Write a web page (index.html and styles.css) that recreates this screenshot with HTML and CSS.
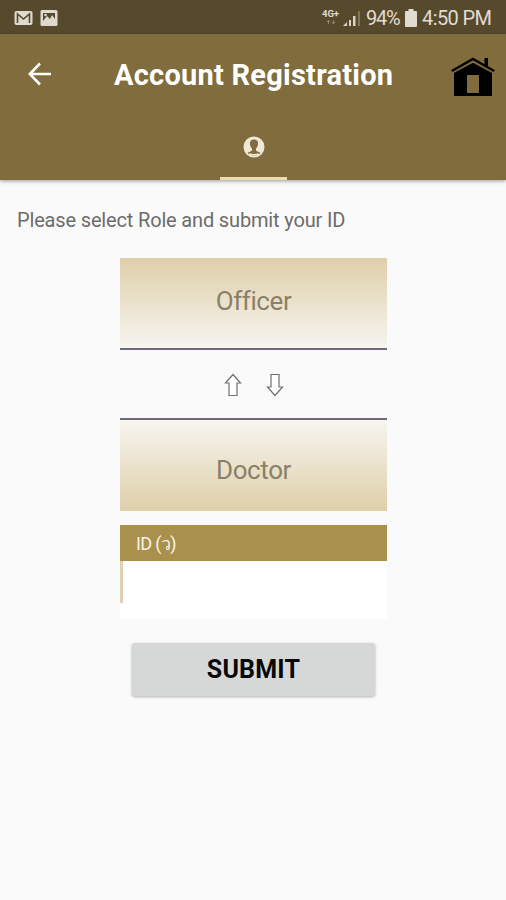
FILE: index.html
```html
<!DOCTYPE html>
<html lang="en">
<head>
<meta charset="utf-8">
<title>Account Registration</title>
<link rel="stylesheet" href="styles.css">
</head>
<body>
<div class="status">
  <svg class="notices" width="44" height="18" viewBox="0 0 44 18">
    <rect x="0.500" y="2" width="18" height="14" rx="2" fill="#dedad0"/>
    <path d="M3.500 14V5l6 5 6-5v9" fill="none" stroke="#574a2c" stroke-width="1.600"/>
    <rect x="26.500" y="1" width="17" height="16" rx="1.500" fill="#dedad0"/>
    <path d="M29 12V4h12v6l-3-4-2 4-3-3z" fill="#574a2c"/>
    <circle cx="31.500" cy="6" r="1.300" fill="#dedad0"/>
  </svg>
  <div class="network"><span>4G+</span><svg width="10" height="6" viewBox="0 0 10 6"><path d="M1 3l1.500-2L4 3M2.500 1v4M6 3l1.500 2L9 3M7.500 5V1" fill="none" stroke="#8b8164" stroke-width="1"/></svg></div>
  <svg class="signal" width="18" height="18" viewBox="0 0 18 18"><path d="M0 17l4-4v4zM6 11h2v6H6zM10 7h2.500v10H10z" fill="#d8d3c7"/><path d="M15 2h2v15h-2z" fill="#81775b"/></svg>
  <span class="percent">94%</span>
  <svg class="battery" width="12" height="18" viewBox="0 0 12 18"><path d="M3.500 0h5v2H11q1 0 1 1v14q0 1-1 1H1q-1 0-1-1V3q0-1 1-1h2.500z" fill="#e0dcd3"/></svg>
  <span class="time">4:50 PM</span>
</div>
<header class="header">
  <div class="toolbar">
    <svg class="back" width="24" height="24" viewBox="0 0 24 24"><path d="M23 12H2M12 1.500L1.800 12 12 22.500" fill="none" stroke="#fff" stroke-width="2.600"/></svg>
    <h1 class="title">Account Registration</h1>
    <svg class="home" width="44" height="40" viewBox="0 0 44 40"><path d="M3 15L22 4.500 41 15V39H3zM16 18V36H28V18z" fill="#000" fill-rule="evenodd"/><path d="M.5 15L22 3.500 43.500 15" fill="none" stroke="#806c3d" stroke-width="4"/><path d="M.8 14L22 2 43.200 14" fill="none" stroke="#000" stroke-width="2.400"/><path d="M33.500 1H37v9l-3.500-2z"/></svg>
  </div>
  <div class="tab">
    <svg width="22" height="22" viewBox="0 0 22 22"><circle cx="11" cy="11" r="10.500" fill="#efe8d7"/><path d="M11 3.500c-3 0-4.300 1.900-4 4.500.2 2 1 3.500 2 4.500v2c-1.200 1-3 1.200-4.500 2.500C6.200 18.800 8.500 19.500 11 19.500s4.800-.7 6.500-2.500c-1.500-1.300-3.300-1.500-4.500-2.500v-2c1-1 1.800-2.500 2-4.500.3-2.600-1-4.500-4-4.500z" fill="#806c3d"/><path d="M6 18q5 1.400 10 0" stroke="#efe8d7" stroke-width="1.500" fill="none"/></svg>
  </div>
</header>
<main class="content">
  <p class="hint">Please select Role and submit your ID</p>
  <div class="form">
    <div class="role role-top"><span>Officer</span></div>
    <div class="arrows">
      <svg width="18" height="24" viewBox="0 0 18 24"><path d="M9 1.500L16.500 10H13v12.500H5V10H1.500z"/></svg>
      <svg width="18" height="24" viewBox="0 0 18 24"><path d="M9 22.500L16.500 14H13V1.500H5V14H1.500z"/></svg>
    </div>
    <div class="role role-bottom"><span>Doctor</span></div>
    <label class="id-label" for="id">ID (ว)</label>
    <div class="field"><input id="id" type="text"></div>
    <button class="submit">SUBMIT</button>
  </div>
</main>
</body>
</html>
```
FILE: styles.css
```css
* { box-sizing: border-box; }
body {
  margin: 0;
  height: 900px;
  background: #fafafa;
  font-family: Roboto, "Noto Sans", sans-serif;
  overflow: hidden;
}
.status {
  display: flex;
  align-items: center;
  height: 34px;
  padding: 2px 15px 0 14px;
  background: #574a2c;
  color: #e0dcd3;
  font-size: 20px;
  white-space: nowrap;
}
.network {
  display: flex;
  flex-direction: column;
  align-items: center;
  width: 19px;
  margin: -3px 0 0 auto;
  font-size: 9.500px;
  font-weight: 700;
  line-height: 10px;
}
.signal { margin-left: 3px; }
.percent { width: 34px; margin-left: 5px; letter-spacing: -1.200px; }
.battery { margin-left: 5px; }
.time { width: 69px; margin-left: 5px; letter-spacing: -.6px; }
.header {
  height: 146px;
  background: #806c3d;
  box-shadow: 0 1px 4px rgba(0, 0, 0, .4);
}
.toolbar {
  display: flex;
  align-items: center;
  height: 81px;
  padding: 0 11px 0 28px;
}
.back { flex: none; margin-top: -2px; }
.title {
  width: 281px;
  margin: 0 0 0 62px;
  color: #fff;
  font-size: 29px;
  font-weight: 700;
  line-height: 34px;
  letter-spacing: .24px;
  white-space: nowrap;
}
.home { flex: none; margin: 5px 0 0 auto; }
.tab {
  display: flex;
  justify-content: center;
  width: 67px;
  height: 65px;
  margin-left: 220px;
  padding-top: 21px;
  border-bottom: 3px solid #eddcae;
}
.hint {
  margin: 0;
  padding: 28px 0 0 17px;
  color: #6c6c6c;
  font-size: 20px;
  line-height: 24px;
  letter-spacing: -.16px;
}
.form {
  display: flex;
  flex-direction: column;
  width: 267px;
  margin: 26px 0 0 120px;
}
.role {
  display: flex;
  align-items: center;
  justify-content: center;
  height: 92px;
  color: #8a8068;
  font-size: 26px;
  letter-spacing: -.4px;
}
.role-top {
  padding-bottom: 4px;
  border-bottom: 2px solid #6f6876;
  background: linear-gradient(#dfcfaa, #f6f5ef);
}
.role-bottom {
  height: 93px;
  padding-top: 8px;
  border-top: 2px solid #6f6876;
  background: linear-gradient(#f6f5ef, #dfcfaa);
}
.arrows {
  display: flex;
  align-items: center;
  justify-content: center;
  gap: 24px;
  height: 68px;
  padding-top: 2px;
}
.arrows path { fill: #fff; stroke: #707070; stroke-width: 1.200; }
.id-label {
  height: 36px;
  margin-top: 14px;
  padding-left: 16px;
  background: #aa904d;
  color: #f8f3e8;
  font-size: 18px;
  line-height: 38px;
  letter-spacing: -.6px;
}
.field { height: 57px; background: #fff; }
.field input {
  display: block;
  width: 100%;
  height: 42px;
  padding: 0 14px;
  border: 0;
  border-left: 3px solid #ddd2b5;
  background: transparent;
  font: inherit;
}
.submit {
  width: 243px;
  height: 53px;
  margin: 25px 0 0 12px;
  border: 0;
  border-radius: 3px;
  background: #d6d8d7;
  color: #080808;
  box-shadow: 0 1px 3px rgba(0, 0, 0, .3);
  font: 700 25px Roboto, sans-serif;
  letter-spacing: .2px;
}
```
